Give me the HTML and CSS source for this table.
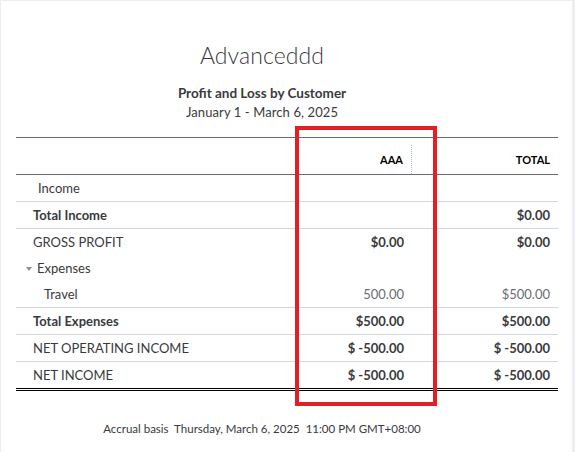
FILE: index.html
```html
<!DOCTYPE html>
<html lang="en">
<head>
<meta charset="utf-8">
<title>Profit and Loss by Customer</title>
<link rel="stylesheet" href="styles.css">
</head>
<body>
<div class="page">
  <div class="report-head">
    <div class="company">Advanceddd</div>
    <div class="report-title">Profit and Loss by Customer</div>
    <div class="report-date">January 1 - March 6, 2025</div>
  </div>
  <div class="table-wrap">
    <table class="report">
      <colgroup>
        <col class="c-label">
        <col class="c-num">
        <col class="c-num">
      </colgroup>
      <thead>
        <tr>
          <th class="h-label"></th>
          <th class="h-num"><div class="h-cell sep">AAA</div></th>
          <th class="h-num"><div class="h-cell">TOTAL</div></th>
        </tr>
      </thead>
      <tbody>
        <tr class="line">
          <td class="lbl ind1">Income</td><td></td><td></td>
        </tr>
        <tr class="line">
          <td class="lbl strong">Total Income</td><td></td><td class="num strong">$0.00</td>
        </tr>
        <tr>
          <td class="lbl">GROSS PROFIT</td><td class="num strong">$0.00</td><td class="num strong">$0.00</td>
        </tr>
        <tr class="short">
          <td class="lbl group"><span class="caret"></span>Expenses</td><td></td><td></td>
        </tr>
        <tr class="line">
          <td class="lbl ind2">Travel</td><td class="num light">500.00</td><td class="num light">$500.00</td>
        </tr>
        <tr class="line">
          <td class="lbl strong">Total Expenses</td><td class="num strong">$500.00</td><td class="num strong">$500.00</td>
        </tr>
        <tr class="line">
          <td class="lbl">NET OPERATING INCOME</td><td class="num strong">$ -500.00</td><td class="num strong">$ -500.00</td>
        </tr>
        <tr class="final">
          <td class="lbl">NET INCOME</td><td class="num strong">$ -500.00</td><td class="num strong">$ -500.00</td>
        </tr>
      </tbody>
    </table>
    <div class="highlight"></div>
  </div>
  <div class="report-foot">Accrual basis&nbsp; Thursday, March 6, 2025&nbsp; 11:00 PM GMT+08:00</div>
</div>
</body>
</html>
```

FILE: styles.css
```css
html, body {
  margin: 0;
  padding: 0;
}
body {
  background: #eceef1;
  font-family: "Lato", "Open Sans", sans-serif;
  color: #393a3d;
}
.page {
  background: #ffffff;
  margin: 1px 3px 0 1px;
  min-height: 451px;
  padding: 0 15px;
  box-sizing: border-box;
}
.report-head {
  margin-right: 49px;
  text-align: center;
  padding-top: 39px;
}
.company {
  font-size: 23px;
  font-weight: 300;
  line-height: 30px;
  letter-spacing: 0.1px;
}
.report-title {
  margin-top: 14px;
  font-size: 13.5px;
  font-weight: 700;
  line-height: 18px;
}
.report-date {
  font-size: 13px;
  letter-spacing: 0.1px;
  line-height: 20px;
}
.table-wrap {
  position: relative;
  margin-top: 15px;
}
.report {
  width: 542px;
  border-collapse: collapse;
  font-size: 13px;
  border-top: 1px solid #6b6c72;
}
.c-num {
  width: 146px;
}
.report th {
  padding: 7px 0 0 0;
  height: 29px;
  border-bottom: 1px solid #6b6c72;
  vertical-align: top;
}
.h-cell {
  height: 29px;
  display: flex;
  align-items: center;
  justify-content: flex-end;
  padding-right: 8px;
  padding-top: 0;
  box-sizing: border-box;
  font-size: 11px;
  font-weight: 700;
  color: #000000;
}
.h-cell.sep {
  border-right: 1px dotted #b8b8b8;
}
.report td {
  height: 26px;
  padding: 0;
  vertical-align: middle;
  white-space: nowrap;
}
.report tr.line td {
  border-bottom: 1px solid #d4d7dc;
}
.report tr.final td {
  border-bottom: 3px double #000000;
}
.lbl {
  padding-left: 17px !important;
}
.lbl.ind1 {
  padding-left: 22px !important;
}
.lbl.ind2 {
  padding-left: 28px !important;
}
.lbl.group {
  padding-left: 10px !important;
}
.caret {
  display: inline-block;
  width: 0;
  height: 0;
  border-left: 3.5px solid transparent;
  border-right: 3.5px solid transparent;
  border-top: 4px solid #8d9096;
  margin-right: 5px;
  vertical-align: 2px;
}
.num {
  text-align: right;
  padding-right: 8px !important;
}
.strong {
  font-weight: 700;
}
.light {
  color: #6b6c72;
}
.highlight {
  position: absolute;
  left: 279px;
  top: -11px;
  width: 134px;
  height: 272px;
  border: 4px solid #e31e24;
}
.report-foot {
  text-align: center;
  margin-right: 49px;
  margin-top: 30px;
  font-size: 11.5px;
  line-height: 16px;
}
```
